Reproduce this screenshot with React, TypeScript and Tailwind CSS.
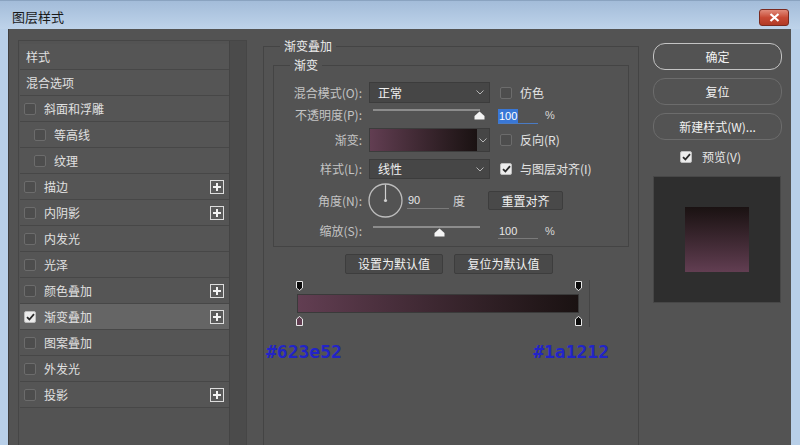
import React from "react";

const cjk = { fontFamily: '"Noto Sans CJK SC", "Noto Sans", sans-serif' };

const Check = ({ on = false }: { on?: boolean }) => (
  <div
    className={
      on
        ? "w-[12px] h-[12px] rounded-[2px] bg-[#ececec] border border-[#bdbdbd] flex items-center justify-center shrink-0"
        : "w-[12px] h-[12px] rounded-[2px] bg-[#4d4d4d] border border-[#6c6c6c] shrink-0"
    }
  >
    {on && (
      <svg width="9" height="8" viewBox="0 0 9 8">
        <path d="M1 4.2 L3.4 6.5 L8 1.2" fill="none" stroke="#2a2a2a" strokeWidth="1.8" />
      </svg>
    )}
  </div>
);

const Plus = () => (
  <div className="w-[14px] h-[14px] border border-[#dcdcdc] bg-[#5a5a5a] flex items-center justify-center">
    <svg width="10" height="10" viewBox="0 0 10 10">
      <path d="M5 1 V9 M1 5 H9" stroke="#f2f2f2" strokeWidth="2" />
    </svg>
  </div>
);

const Chevron = () => (
  <svg width="8" height="5" viewBox="0 0 8 5">
    <path d="M0.5 0.5 L4 4 L7.5 0.5" fill="none" stroke="#b5b5b5" strokeWidth="1" />
  </svg>
);

const Thumb = () => (
  <svg width="11" height="9" viewBox="0 0 11 9">
    <path d="M0.5 8.5 V5 L5.5 0.5 L10.5 5 V8.5 Z" fill="#f4f4f4" />
  </svg>
);

type Item = { label: string; box?: boolean; indent?: boolean; plus?: boolean; on?: boolean; sel?: boolean };

const items: Item[] = [
  { label: "样式" },
  { label: "混合选项" },
  { label: "斜面和浮雕", box: true },
  { label: "等高线", box: true, indent: true },
  { label: "纹理", box: true, indent: true },
  { label: "描边", box: true, plus: true },
  { label: "内阴影", box: true, plus: true },
  { label: "内发光", box: true },
  { label: "光泽", box: true },
  { label: "颜色叠加", box: true, plus: true },
  { label: "渐变叠加", box: true, plus: true, on: true, sel: true },
  { label: "图案叠加", box: true },
  { label: "外发光", box: true },
  { label: "投影", box: true, plus: true },
];

const Label = ({ children }: { children: React.ReactNode }) => (
  <div className="w-[89px] text-right text-[12px] text-[#c4c4c4] pr-[1px] shrink-0">{children}</div>
);

const Slider = ({ pos }: { pos: number }) => (
  <div className="w-[121px] h-full flex flex-col pl-[4px] pt-[4px]">
    <div className="w-[107px] h-[2px] bg-[#8c8c8c]" />
    <div className="flex">
      <div style={{ width: pos - 5 }} />
      <Thumb />
    </div>
  </div>
);

const StopDown = () => (
  <svg width="7" height="10" viewBox="0 0 7 10">
    <path d="M0.5 0.5 H6.5 V7 L3.5 9.5 L0.5 7 Z" fill="#0c0c0c" stroke="#e8e8e8" />
  </svg>
);

const StopUp = ({ fill }: { fill: string }) => (
  <svg width="7" height="10" viewBox="0 0 7 10">
    <path d="M0.5 9.5 H6.5 V3 L3.5 0.5 L0.5 3 Z" fill={fill} stroke="#e8e8e8" />
  </svg>
);

export default function App() {
  return (
    <div className="w-[800px] h-[445px] overflow-hidden bg-[#b8cfe8] flex flex-col" style={cjk}>
      {/* title bar */}
      <div className="h-[29px] shrink-0 flex items-center justify-between pl-[12px] pr-[11px] bg-gradient-to-b from-[#a3bcd9] to-[#bed3ea] border-t border-[#8aa3c0]">
        <div className="text-[13px] text-[#1a1a1a] leading-none mt-[2px]">图层样式</div>
        <div className="w-[30px] h-[17px] mt-[5px] rounded-[3px] border border-[#7b2a1f] bg-gradient-to-b from-[#e08a7a] via-[#c84a35] to-[#b13a25] flex items-center justify-center">
          <svg width="11" height="9" viewBox="0 0 11 9">
            <path d="M1.5 1 L9.5 8 M9.5 1 L1.5 8" stroke="#ffffff" strokeWidth="2.2" />
          </svg>
        </div>
      </div>

      {/* body */}
      <div className="flex-1 ml-[8px] mr-[9px] bg-[#535353] flex items-start border-l border-[#3e3e3e]">
        {/* left list */}
        <div className="ml-[9px] mt-[11px] w-[229px] h-[420px] border border-[#464646] flex shrink-0">
          <div className="w-[210px] pt-[3px] pl-[1px] flex flex-col">
            {items.map((it) => (
              <div
                key={it.label}
                className={
                  "h-[26px] flex items-center border-b border-[#474747] text-[12px] text-[#e0e0e0] " +
                  (it.sel ? "bg-[#656565]" : "bg-[#555555]")
                }
              >
                {it.box ? (
                  <div className={"flex items-center gap-[8px] " + (it.indent ? "pl-[14px]" : "pl-[4px]")}>
                    <Check on={it.on} />
                    <span>{it.label}</span>
                  </div>
                ) : (
                  <span className="pl-[6px]">{it.label}</span>
                )}
                <div className="flex-1" />
                {it.plus && (
                  <div className="mr-[5px]">
                    <Plus />
                  </div>
                )}
              </div>
            ))}
          </div>
          <div className="flex-1 bg-[#4b4b4b] border-l border-[#444444]" />
        </div>

        {/* middle */}
        <fieldset className="ml-[16px] mt-[9px] w-[376px] h-[420px] border border-[#444444] p-0 m-0 shrink-0">
          <legend className="ml-[16px] px-[4px] text-[12px] leading-[16px] text-[#ececec]">渐变叠加</legend>
          <fieldset className="ml-[9px] mt-[3px] w-[356px] border border-[#444444] p-0 pb-[6px]">
            <legend className="ml-[16px] px-[4px] text-[12px] leading-[16px] text-[#ececec]">渐变</legend>

            {/* blend mode */}
            <div className="mt-[9px] h-[21px] flex items-center">
              <Label>混合模式(O):</Label>
              <div className="ml-[6px] w-[121px] h-full bg-[#464646] border border-[#3c3c3c] flex items-center justify-between pl-[8px] pr-[5px] text-[12px] text-[#f0f0f0]">
                <span>正常</span>
                <Chevron />
              </div>
              <div className="ml-[10px] flex items-center gap-[8px] text-[12px] text-[#e4e4e4]">
                <Check />
                <span>仿色</span>
              </div>
            </div>

            {/* opacity */}
            <div className="mt-[2px] h-[20px] flex items-center">
              <Label>不透明度(P):</Label>
              <div className="ml-[6px] h-full">
                <Slider pos={106} />
              </div>
              <div className="ml-[8px] w-[40px] h-[17px] border-b border-[#4a7bc4] flex items-end">
                <span className="bg-[#3977d6] text-white text-[11px] leading-[14px] px-[1px]" style={{ fontFamily: '"Liberation Sans", sans-serif' }}>100</span>
              </div>
              <span className="ml-[7px] text-[11px] text-[#d8d8d8]" style={{ fontFamily: '"Liberation Sans", sans-serif' }}>%</span>
            </div>

            {/* gradient */}
            <div className="mt-[3px] h-[24px] flex items-center">
              <Label>渐变:</Label>
              <div className="ml-[6px] w-[121px] h-full flex border border-[#3c3c3c]">
                <div className="w-[107px] h-full bg-gradient-to-r from-[#623e52] to-[#1a1212]" />
                <div className="flex-1 bg-[#464646] flex items-center justify-center">
                  <Chevron />
                </div>
              </div>
              <div className="ml-[10px] flex items-center gap-[8px] text-[12px] text-[#e4e4e4]">
                <Check />
                <span>反向(R)</span>
              </div>
            </div>

            {/* style */}
            <div className="mt-[7px] h-[20px] flex items-center">
              <Label>样式(L):</Label>
              <div className="ml-[6px] w-[121px] h-full bg-[#464646] border border-[#3c3c3c] flex items-center justify-between pl-[8px] pr-[5px] text-[12px] text-[#f0f0f0]">
                <span>线性</span>
                <Chevron />
              </div>
              <div className="ml-[10px] flex items-center gap-[8px] text-[12px] text-[#e4e4e4]">
                <Check on />
                <span>与图层对齐(I)</span>
              </div>
            </div>

            {/* angle */}
            <div className="mt-[4px] h-[35px] flex items-center">
              <Label>角度(N):</Label>
              <div className="ml-[5px] w-[35px] h-[35px]">
                <svg width="35" height="35" viewBox="0 0 35 35">
                  <circle cx="17.5" cy="17.5" r="16.5" fill="none" stroke="#bdbdbd" strokeWidth="1.3" />
                  <path d="M17.5 1.5 V17.5" stroke="#d0d0d0" strokeWidth="1.2" />
                  <circle cx="17.5" cy="17.5" r="1.6" fill="#d0d0d0" />
                </svg>
              </div>
              <div className="ml-[4px] w-[42px] h-[17px] border-b border-[#7a7a7a] text-[11px] text-[#e6e6e6] pl-[1px]" style={{ fontFamily: '"Liberation Sans", sans-serif' }}>90</div>
              <span className="ml-[4px] text-[12px] text-[#d4d4d4]">度</span>
              <div className="ml-[23px] w-[75px] h-[19px] bg-[#494949] border border-[#3d3d3d] rounded-[2px] flex items-center justify-center text-[12px] text-[#f0f0f0]">
                重置对齐
              </div>
            </div>

            {/* scale */}
            <div className="mt-[4px] h-[18px] flex items-center">
              <Label>缩放(S):</Label>
              <div className="ml-[6px] h-full">
                <Slider pos={66} />
              </div>
              <div className="ml-[8px] w-[40px] h-[16px] border-b border-[#7a7a7a] text-[11px] text-[#e6e6e6] pl-[1px]" style={{ fontFamily: '"Liberation Sans", sans-serif' }}>100</div>
              <span className="ml-[7px] text-[11px] text-[#d8d8d8]" style={{ fontFamily: '"Liberation Sans", sans-serif' }}>%</span>
            </div>
          </fieldset>

          {/* default buttons */}
          <div className="mt-[7px] flex justify-center gap-[11px] pr-[4px]">
            <div className="w-[98px] h-[20px] bg-[#494949] border border-[#3d3d3d] rounded-[2px] flex items-center justify-center text-[12px] text-[#f0f0f0]">设置为默认值</div>
            <div className="w-[99px] h-[20px] bg-[#494949] border border-[#3d3d3d] rounded-[2px] flex items-center justify-center text-[12px] text-[#f0f0f0]">复位为默认值</div>
          </div>

          {/* gradient editor bar */}
          <div className="mt-[5px] ml-[33px] flex items-start">
            <div className="w-[282px] flex flex-col">
              <div className="h-[12px] flex justify-between items-end -mx-[1px] -mr-[3px]">
                <StopDown />
                <StopDown />
              </div>
              <div className="mt-[3px] h-[19px] bg-gradient-to-r from-[#623e52] to-[#1a1212] border border-[#3a3a3a]" />
              <div className="mt-[3px] h-[10px] flex justify-between items-start -mx-[1px] -mr-[3px]">
                <StopUp fill="#623e52" />
                <StopUp fill="#0c0c0c" />
              </div>
            </div>
            <div className="ml-[10px] mt-[1px] w-[1px] h-[47px] bg-[#454545]" />
          </div>

          {/* hex annotations */}
          <div
            className="mt-[15px] ml-[2px] mr-[29px] flex justify-between text-[18px] leading-[20px] font-bold text-[#2224c8]"
            style={{ fontFamily: '"DejaVu Sans Mono", monospace' }}
          >
            <span>#623e52</span>
            <span>#1a1212</span>
          </div>
        </fieldset>

        {/* right column */}
        <div className="ml-[14px] mt-[14px] w-[129px] flex flex-col shrink-0">
          <div className="h-[27px] rounded-[12px] border border-[#c4c4c4] flex items-center justify-center text-[12px] text-[#f2f2f2]">确定</div>
          <div className="mt-[8px] h-[27px] rounded-[12px] border border-[#6c6c6c] flex items-center justify-center text-[12px] text-[#f2f2f2]">复位</div>
          <div className="mt-[8px] h-[27px] rounded-[12px] border border-[#6c6c6c] flex items-center justify-center text-[12px] text-[#f2f2f2]">新建样式(W)...</div>
          <div className="mt-[10px] h-[14px] flex items-center pl-[27px] gap-[10px] text-[12px] text-[#e8e8e8]">
            <Check on />
            <span>预览(V)</span>
          </div>
          <div className="mt-[12px] w-[128px] h-[127px] bg-[#2e2e2e] border border-[#474747] flex items-start justify-center pt-[30px] pr-[1px]">
            <div className="w-[64px] h-[65px] bg-gradient-to-b from-[#1a1212] to-[#623e52]" />
          </div>
        </div>
      </div>
    </div>
  );
}
